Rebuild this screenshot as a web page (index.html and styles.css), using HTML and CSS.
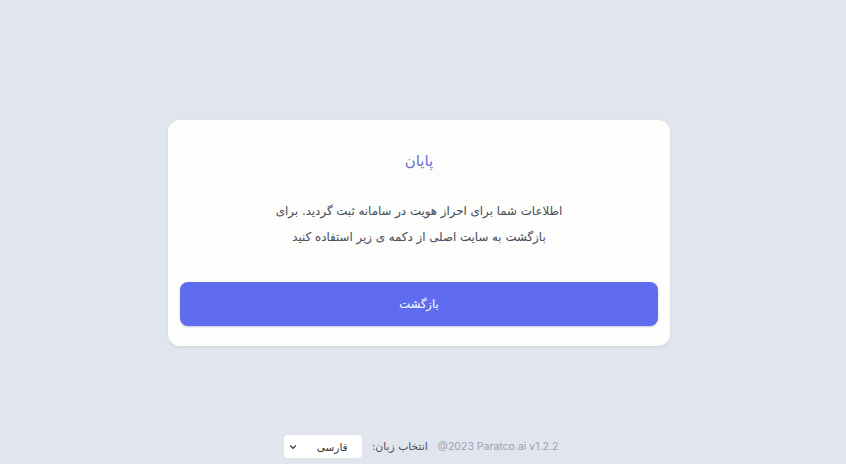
FILE: index.html
```html
<!DOCTYPE html>
<html lang="fa" dir="rtl">
<head>
<meta charset="utf-8">
<title>پایان</title>
<link rel="stylesheet" href="styles.css">
</head>
<body>
<div class="page">
  <main class="main">
    <section class="card">
      <h1 class="title">پایان</h1>
      <p class="message">اطلاعات شما برای احراز هویت در سامانه ثبت گردید. برای<br>بازگشت به سایت اصلی از دکمه ی زیر استفاده کنید</p>
      <button class="btn" type="button">بازگشت</button>
    </section>
  </main>
  <footer class="footer">
    <span class="copy" dir="ltr">@2023 Paratco.ai v1.2.2</span>
    <label class="lang-label">انتخاب زبان:</label>
    <div class="select">
      <span class="select-text">فارسی</span>
      <svg class="chev" width="8" height="6" viewBox="0 0 8 6"><path d="M1.2 1.5 L4 4.3 L6.8 1.5" fill="none" stroke="#333" stroke-width="1.2"/></svg>
    </div>
  </footer>
</div>
</body>
</html>
```
FILE: styles.css
```css
* { box-sizing: border-box; }
html, body { margin: 0; padding: 0; }
body {
  background: #e1e6ee;
  font-family: "DejaVu Sans", "Noto Sans", sans-serif;
  color: #4a4f5c;
}
.page {
  min-height: 464px;
  display: flex;
  flex-direction: column;
}
.main {
  flex: 1;
  display: flex;
  align-items: center;
  justify-content: center;
  padding-top: 38px;
}
.card {
  width: 502px;
  margin-right: 8px;
  background: #fdfdfc;
  border-radius: 12px;
  padding: 30px 12px 20px;
  box-shadow: 0 1px 3px rgba(60, 70, 90, 0.12);
  display: flex;
  flex-direction: column;
  align-items: center;
}
.title {
  margin: 0;
  font-size: 15px;
  font-weight: normal;
  line-height: 22px;
  color: #6b72d6;
}
.message {
  margin: 26px 0 0;
  text-align: center;
  font-size: 11.8px;
  line-height: 26px;
  color: #4a4f5c;
  -webkit-text-stroke: 0.08px #4a4f5c;
}
.btn {
  margin-top: 32px;
  width: 100%;
  height: 44px;
  border: none;
  border-radius: 8px;
  background: #5f6cf0;
  color: #f3f3ff;
  font-family: "DejaVu Sans", sans-serif;
  font-size: 11.5px;
  -webkit-text-stroke: 0.15px #f3f3ff;
  box-shadow: 0 1px 2px rgba(60, 60, 140, 0.25);
}
.footer {
  height: 36px;
  display: flex;
  align-items: flex-start;
  justify-content: center;
  gap: 10px;
  padding: 7px 4px 0 0;
}
.copy {
  font-family: Inter, "DejaVu Sans", sans-serif;
  font-size: 10.5px;
  color: #9aa1b0;
  line-height: 23px;
}
.lang-label {
  font-size: 10.8px;
  color: #4a4f5c;
  line-height: 23px;
}
.select {
  width: 78px;
  height: 23px;
  background: #fff;
  border-radius: 4px;
  display: flex;
  align-items: center;
  justify-content: space-between;
  padding: 0 14px 0 5px;
}
.select-text {
  font-size: 10.5px;
  color: #333;
}
.chev { display: block; }
```
